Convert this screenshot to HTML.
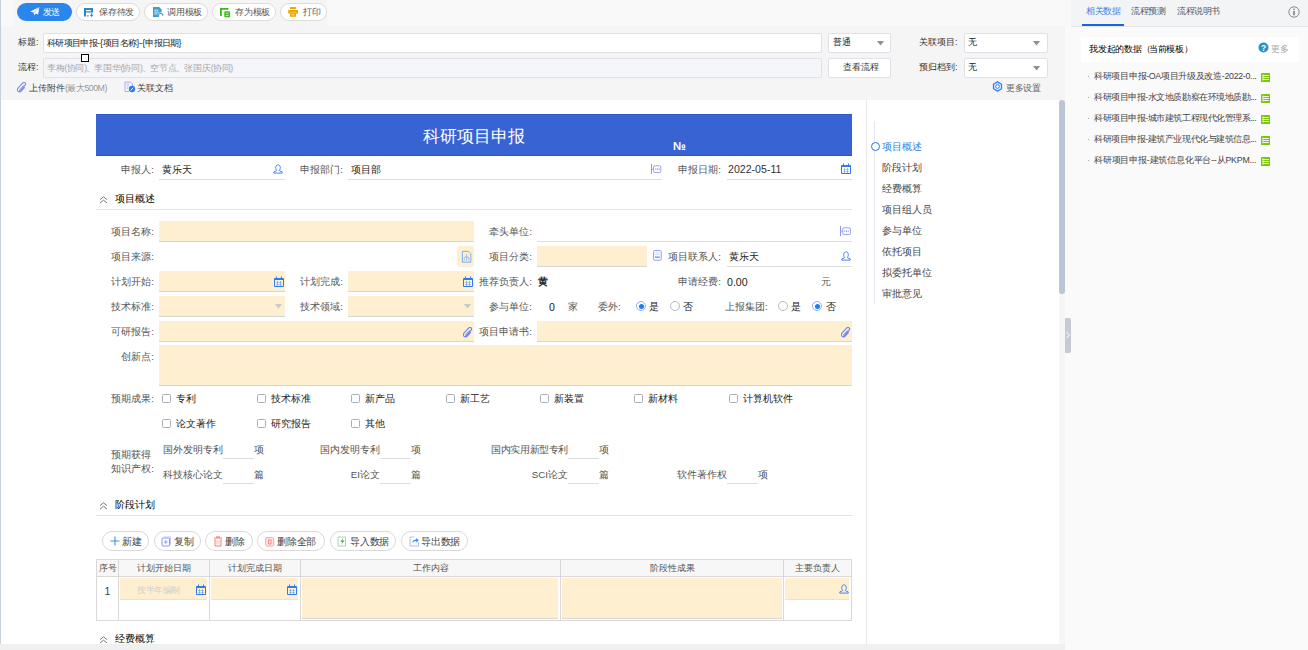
<!DOCTYPE html>
<html><head><meta charset="utf-8">
<style>
*{margin:0;padding:0;box-sizing:border-box}
html,body{width:1308px;height:650px;overflow:hidden;background:#fafafa;font-family:"Liberation Sans",sans-serif;color:#333;font-size:10px}
.a{position:absolute}
.t{position:absolute;white-space:nowrap;line-height:14px;font-size:8.8px}
#main{left:0;top:26px;width:1065px;height:624px;background:#f5f5f5;border-left:1px solid #c9d0de}
#toolbar{left:13px;top:0;width:314px;height:26px;background:#f5f5f5}
#band{left:0;top:0;width:1071px;height:26px;background:#f9f9f9;border-left:1px solid #c9d0de}
.btn{position:absolute;top:3px;height:18px;border:1px solid #dcdcdc;border-radius:9px;background:#fff;font-size:8.8px;line-height:16px;color:#555;white-space:nowrap;letter-spacing:-0.25px}
.inp{position:absolute;background:#fff;border:1px solid #dfe1e6;border-radius:2px}
#content{left:1px;top:100px;width:1058px;height:544px;background:#fff;overflow:hidden}
#bottom{left:0;top:644px;width:1065px;height:6px;background:#f0f0f0}

.L{position:absolute;left:0;white-space:nowrap;line-height:14px;font-size:9.8px;color:#555;text-align:right}
.V{position:absolute;white-space:nowrap;line-height:14px;font-size:9.8px;color:#222}
.B{position:absolute;background:#feefd0;border-bottom:1px solid #d6d6d6}
.U{position:absolute;border-bottom:1px solid #dedede}
.S{position:absolute;white-space:nowrap;line-height:14px;font-size:9.8px;color:#000;font-weight:500}
.cb{position:absolute;width:9px;height:9px;border:1px solid #a9aeb8;border-radius:1.5px;background:#fff}
.rd{position:absolute;width:10px;height:10px;border:1px solid #b4b9c6;border-radius:50%;background:#fff}
.rd.on{border-color:#8fb0f5}
.rd.on:after{content:"";position:absolute;left:1.5px;top:1.5px;width:5px;height:5px;border-radius:50%;background:#1a7cf0}
.tb{position:absolute;top:531px;height:20px;border:1px solid #d9d9d9;border-radius:10px;background:#fff;font-size:9.8px;line-height:19px;color:#444;white-space:nowrap;letter-spacing:-0.2px}
</style></head><body>
<div id="band" class="a"></div>
<div id="main" class="a"></div>
<div id="toolbar" class="a"></div>
<!-- toolbar buttons -->
<div class="a" style="left:17px;top:3px;width:55px;height:18px;border-radius:9px;background:#2a86ec;color:#fff;font-size:8.8px;line-height:18px;white-space:nowrap">
  <svg class="a" style="left:13px;top:4px" width="10" height="9" viewBox="0 0 10 9"><path d="M9.4 0 L0.3 4.6 L3.4 5.6 L4.5 8.4 L5.6 6.6 L8 7.6 Z" fill="#fff"/><path d="M9.4 0 L3.8 5.8" stroke="#2a86ec" stroke-width="0.5"/></svg>
  <span class="a" style="left:26px;top:0;letter-spacing:-0.6px">发送</span>
</div>
<div class="btn" style="left:76px;width:64px"><span class="a" style="left:22px;top:0">保存待发</span></div>
<div class="btn" style="left:144px;width:64px"><span class="a" style="left:22px;top:0">调用模板</span></div>
<div class="btn" style="left:212px;width:64px"><span class="a" style="left:22px;top:0">存为模板</span></div>
<div class="btn" style="left:280px;width:47px"><span class="a" style="left:22px;top:0">打印</span></div>

<!-- header form -->
<div class="t" style="left:18px;top:35px;color:#333">标题:</div>
<div class="inp" style="left:43px;top:33px;width:779px;height:20px"></div>
<div class="t" style="left:47px;top:36px;color:#222;letter-spacing:-0.65px">科研项目申报<span style="letter-spacing:0">-{</span>项目名称<span style="letter-spacing:0">}-{</span>申报日期}</div>
<div class="t" style="left:18px;top:60px;color:#333">流程:</div>
<div class="inp" style="left:43px;top:58px;width:779px;height:20px;background:#f5f6fa"></div>
<div class="a" style="left:81px;top:54px;width:8px;height:8px;border:1.5px solid #000;background:#fff"></div>
<div class="t" style="left:47px;top:61px;color:#aaa;letter-spacing:-0.2px">李梅<span style="letter-spacing:-1px">(</span>协同<span style="letter-spacing:-1px">)、</span>李国华<span style="letter-spacing:-1px">(</span>协同<span style="letter-spacing:-1px">)、</span>空节点<span style="letter-spacing:-1px">、</span>张国庆<span style="letter-spacing:-1px">(</span>协同<span style="letter-spacing:-1px">)</span></div>
<div class="inp" style="left:828px;top:33px;width:63px;height:20px"></div>
<div class="t" style="left:833px;top:35px;color:#222">普通</div>
<div class="inp" style="left:828px;top:58px;width:63px;height:20px"></div>
<div class="t" style="left:843px;top:60px;color:#333">查看流程</div>
<div class="t" style="left:919px;top:35px;color:#333">关联项目:</div>
<div class="inp" style="left:964px;top:33px;width:84px;height:20px"></div>
<div class="t" style="left:968px;top:35px;color:#222">无</div>
<div class="t" style="left:919px;top:60px;color:#333">预归档到:</div>
<div class="inp" style="left:964px;top:58px;width:84px;height:20px"></div>
<div class="t" style="left:968px;top:60px;color:#222">无</div>
<div class="t" style="left:1006px;top:81px;color:#666;letter-spacing:-0.5px">更多设置</div>
<div class="t" style="left:29px;top:81px;color:#444">上传附件<span style="color:#999;letter-spacing:-0.5px">(最大500M)</span></div>
<div class="t" style="left:137px;top:81px;color:#444">关联文档</div>

<!-- content -->
<div id="content" class="a"></div>
<div class="a" style="left:1059px;top:100px;width:6px;height:544px;background:#f6f6f6"></div>
<div class="a" style="left:1059px;top:100px;width:6px;height:194px;background:#bcc5d6;border-radius:3px"></div>
<div class="a" style="left:866px;top:100px;width:1px;height:544px;background:#e6e8ee"></div>

<!-- banner -->
<div class="a" style="left:96px;top:114px;width:756px;height:42px;background:#3863d2;border-top:1px solid #3159cc;border-bottom:1px solid #2d55c8"></div>
<div class="t" style="left:423px;top:127px;font-size:17px;line-height:20px;color:#fff;font-weight:500">科研项目申报</div>
<div class="t" style="left:673px;top:139px;font-size:11.5px;color:#fff;font-weight:bold">№</div>


<!-- form top row -->
<div class="L" style="width:154px;top:163px">申报人:</div>
<div class="U" style="left:159px;top:160px;width:126px;height:20px"></div>
<div class="V" style="left:162px;top:163px">黄乐天</div>
<div class="L" style="width:343px;top:163px">申报部门:</div>
<div class="U" style="left:348px;top:160px;width:314px;height:20px"></div>
<div class="V" style="left:351px;top:163px">项目部</div>
<div class="L" style="width:721px;top:163px">申报日期:</div>
<div class="U" style="left:727px;top:160px;width:125px;height:20px"></div>
<div class="V" style="left:728px;top:162px;font-size:10.6px;color:#333">2022-05-11</div>

<div class="S" style="left:115px;top:192px">项目概述</div>
<div class="a" style="left:96px;top:209px;width:756px;height:1px;background:#e4e4e4"></div>

<!-- overview rows -->
<div class="L" style="width:154px;top:225px">项目名称:</div>
<div class="B" style="left:159px;top:221px;width:315px;height:21px"></div>
<div class="L" style="width:532px;top:225px">牵头单位:</div>
<div class="U" style="left:537px;top:221px;width:315px;height:21px"></div>

<div class="L" style="width:154px;top:250px">项目来源:</div>
<div class="a" style="left:457px;top:246px;width:17px;height:21px;background:#feefd0;border-radius:3px"></div>
<div class="L" style="width:532px;top:250px">项目分类:</div>
<div class="B" style="left:537px;top:246px;width:110px;height:21px"></div>
<div class="L" style="width:721px;top:250px">项目联系人:</div>
<div class="U" style="left:727px;top:246px;width:125px;height:21px"></div>
<div class="V" style="left:729px;top:250px">黄乐天</div>

<div class="L" style="width:154px;top:275px">计划开始:</div>
<div class="B" style="left:159px;top:271px;width:126px;height:21px"></div>
<div class="L" style="width:343px;top:275px">计划完成:</div>
<div class="B" style="left:348px;top:271px;width:126px;height:21px"></div>
<div class="L" style="width:532px;top:275px">推荐负责人:</div>
<div class="V" style="left:538px;top:275px;font-weight:bold">黄</div>
<div class="L" style="width:721px;top:275px">申请经费:</div>
<div class="V" style="left:727px;top:275px;font-size:10.6px">0.00</div>
<div class="V" style="left:821px;top:275px;color:#555">元</div>

<div class="L" style="width:154px;top:300px">技术标准:</div>
<div class="B" style="left:159px;top:296px;width:126px;height:21px"></div>
<div class="L" style="width:343px;top:300px">技术领域:</div>
<div class="B" style="left:348px;top:296px;width:126px;height:21px"></div>
<div class="L" style="width:532px;top:300px">参与单位:</div>
<div class="V" style="left:549px;top:300px;font-size:10.6px">0</div>
<div class="V" style="left:568px;top:300px;color:#555">家</div>
<div class="V" style="left:598px;top:300px;color:#555">委外:</div>
<div class="rd on" style="left:636px;top:301px"></div>
<div class="V" style="left:649px;top:300px">是</div>
<div class="rd" style="left:670px;top:301px"></div>
<div class="V" style="left:683px;top:300px">否</div>
<div class="V" style="left:725px;top:300px;color:#555">上报集团:</div>
<div class="rd" style="left:778px;top:301px"></div>
<div class="V" style="left:791px;top:300px">是</div>
<div class="rd on" style="left:812px;top:301px"></div>
<div class="V" style="left:826px;top:300px">否</div>

<div class="L" style="width:154px;top:325px">可研报告:</div>
<div class="B" style="left:159px;top:321px;width:315px;height:21px"></div>
<div class="L" style="width:532px;top:325px">项目申请书:</div>
<div class="B" style="left:537px;top:321px;width:315px;height:21px"></div>

<div class="L" style="width:154px;top:350px">创新点:</div>
<div class="B" style="left:159px;top:345px;width:693px;height:41px"></div>

<div class="L" style="width:154px;top:392px">预期成果:</div>
<div class="cb" style="left:162px;top:394px"></div><div class="V" style="left:176px;top:392px">专利</div>
<div class="cb" style="left:257px;top:394px"></div><div class="V" style="left:271px;top:392px">技术标准</div>
<div class="cb" style="left:351px;top:394px"></div><div class="V" style="left:365px;top:392px">新产品</div>
<div class="cb" style="left:446px;top:394px"></div><div class="V" style="left:460px;top:392px">新工艺</div>
<div class="cb" style="left:540px;top:394px"></div><div class="V" style="left:554px;top:392px">新装置</div>
<div class="cb" style="left:634px;top:394px"></div><div class="V" style="left:648px;top:392px">新材料</div>
<div class="cb" style="left:729px;top:394px"></div><div class="V" style="left:743px;top:392px">计算机软件</div>
<div class="cb" style="left:162px;top:419px"></div><div class="V" style="left:176px;top:417px">论文著作</div>
<div class="cb" style="left:257px;top:419px"></div><div class="V" style="left:271px;top:417px">研究报告</div>
<div class="cb" style="left:351px;top:419px"></div><div class="V" style="left:365px;top:417px">其他</div>

<div class="L" style="width:151px;top:448px">预期获得</div>
<div class="L" style="width:154px;top:462px">知识产权:</div>
<div class="V" style="left:0;width:223px;text-align:right;top:443px;color:#555">国外发明专利</div><div class="U" style="left:223px;top:440px;width:31px;height:19px"></div><div class="V" style="left:254px;top:443px;color:#555">项</div>
<div class="V" style="left:0;width:380px;text-align:right;top:443px;color:#555">国内发明专利</div><div class="U" style="left:380px;top:440px;width:31px;height:19px"></div><div class="V" style="left:411px;top:443px;color:#555">项</div>
<div class="V" style="left:0;width:568px;text-align:right;top:443px;color:#555;letter-spacing:-0.4px">国内实用新型专利</div><div class="U" style="left:568px;top:440px;width:31px;height:19px"></div><div class="V" style="left:599px;top:443px;color:#555">项</div>
<div class="V" style="left:0;width:223px;text-align:right;top:468px;color:#555">科技核心论文</div><div class="U" style="left:223px;top:465px;width:31px;height:19px"></div><div class="V" style="left:254px;top:468px;color:#555">篇</div>
<div class="V" style="left:0;width:380px;text-align:right;top:468px;color:#555">EI论文</div><div class="U" style="left:380px;top:465px;width:31px;height:19px"></div><div class="V" style="left:411px;top:468px;color:#555">篇</div>
<div class="V" style="left:0;width:568px;text-align:right;top:468px;color:#555">SCI论文</div><div class="U" style="left:568px;top:465px;width:31px;height:19px"></div><div class="V" style="left:599px;top:468px;color:#555">篇</div>
<div class="V" style="left:0;width:727px;text-align:right;top:468px;color:#555">软件著作权</div><div class="U" style="left:727px;top:465px;width:31px;height:19px"></div><div class="V" style="left:758px;top:468px;color:#555">项</div>

<div class="S" style="left:115px;top:498px">阶段计划</div>
<div class="a" style="left:96px;top:515px;width:756px;height:1px;background:#e4e4e4"></div>

<div class="tb" style="left:102px;width:47px"><span class="a" style="left:19px;top:0">新建</span></div>
<div class="tb" style="left:154px;width:47px"><span class="a" style="left:19px;top:0">复制</span></div>
<div class="tb" style="left:205px;width:48px"><span class="a" style="left:19px;top:0">删除</span></div>
<div class="tb" style="left:257px;width:68px"><span class="a" style="left:19px;top:0">删除全部</span></div>
<div class="tb" style="left:330px;width:66px"><span class="a" style="left:19px;top:0">导入数据</span></div>
<div class="tb" style="left:401px;width:67px"><span class="a" style="left:19px;top:0">导出数据</span></div>

<!-- table -->
<div class="a" style="left:96px;top:559px;width:756px;height:62px;border:1px solid #d9d9d9;background:#fff"></div>
<div class="a" style="left:97px;top:560px;width:754px;height:17px;background:#f7f7f7;border-bottom:1px solid #d9d9d9"></div>
<div class="a" style="left:118px;top:560px;width:1px;height:60px;background:#d9d9d9"></div>
<div class="a" style="left:209px;top:560px;width:1px;height:60px;background:#d9d9d9"></div>
<div class="a" style="left:300px;top:560px;width:1px;height:60px;background:#d9d9d9"></div>
<div class="a" style="left:560px;top:560px;width:1px;height:60px;background:#d9d9d9"></div>
<div class="a" style="left:783px;top:560px;width:1px;height:60px;background:#d9d9d9"></div>
<div class="V" style="left:97px;width:21px;text-align:center;top:561px;font-size:8.8px;color:#555">序号</div>
<div class="V" style="left:119px;width:90px;text-align:center;top:561px;font-size:8.8px;color:#555">计划开始日期</div>
<div class="V" style="left:210px;width:90px;text-align:center;top:561px;font-size:8.8px;color:#555">计划完成日期</div>
<div class="V" style="left:301px;width:259px;text-align:center;top:561px;font-size:8.8px;color:#555">工作内容</div>
<div class="V" style="left:561px;width:222px;text-align:center;top:561px;font-size:8.8px;color:#555">阶段性成果</div>
<div class="V" style="left:784px;width:67px;text-align:center;top:561px;font-size:8.8px;color:#555">主要负责人</div>
<div class="V" style="left:97px;width:21px;text-align:center;top:584px;color:#444;font-size:10.6px">1</div>
<div class="B" style="left:120px;top:578px;width:87px;height:22px;border-bottom-color:#e6e2da"></div>
<div class="V" style="left:137px;top:583px;font-size:8.8px;color:#cfcfcf;letter-spacing:-0.4px">按半年编制</div>
<div class="B" style="left:211px;top:578px;width:87px;height:22px;border-bottom-color:#e6e2da"></div>
<div class="B" style="left:302px;top:578px;width:256px;height:41px"></div>
<div class="B" style="left:562px;top:578px;width:220px;height:41px"></div>
<div class="B" style="left:785px;top:578px;width:64px;height:22px;border-bottom-color:#e6e2da"></div>

<div class="S" style="left:115px;top:632px">经费概算</div>


<!-- nav -->
<div class="a" style="left:874px;top:121px;width:1px;height:183px;background:#e3e6ec"></div>
<div class="a" style="left:871px;top:142px;width:9px;height:9px;border:1.8px solid #1e7ae6;border-radius:50%;background:#fff"></div>
<div class="V" style="left:882px;top:140px;font-size:9.8px;color:#2f7fe6">项目概述</div>
<div class="V" style="left:882px;top:161px;font-size:9.8px;color:#444">阶段计划</div>
<div class="V" style="left:882px;top:182px;font-size:9.8px;color:#444">经费概算</div>
<div class="V" style="left:882px;top:203px;font-size:9.8px;color:#444">项目组人员</div>
<div class="V" style="left:882px;top:224px;font-size:9.8px;color:#444">参与单位</div>
<div class="V" style="left:882px;top:245px;font-size:9.8px;color:#444">依托项目</div>
<div class="V" style="left:882px;top:266px;font-size:9.8px;color:#444">拟委托单位</div>
<div class="V" style="left:882px;top:287px;font-size:9.8px;color:#444">审批意见</div>
<div id="bottom" class="a"></div>
<!-- right panel -->
<div class="a" style="left:1071px;top:0;width:237px;height:27px;background:#f3f4f6;border-bottom:1px solid #e3e5ea"></div>
<div class="t" style="left:1086px;top:4px;font-size:9px;color:#3b7de8;letter-spacing:-0.45px">相关数据</div>
<div class="a" style="left:1082px;top:24px;width:42px;height:2px;background:#1764e0"></div>
<div class="t" style="left:1131px;top:4px;font-size:9px;color:#555;letter-spacing:-0.45px">流程预测</div>
<div class="t" style="left:1177px;top:4px;font-size:9px;color:#555;letter-spacing:-0.45px">流程说明书</div>
<div class="a" style="left:1081px;top:37px;width:218px;height:25px;background:#fff"></div>
<div class="t" style="left:1089px;top:42px;font-size:9px;color:#000;font-weight:500;letter-spacing:-0.2px">我发起的数据<span style="letter-spacing:-2px">（</span>当前模板<span style="letter-spacing:-2px">）</span></div>
<div class="t" style="left:1271px;top:42px;font-size:9px;color:#aaa;letter-spacing:-0.5px">更多</div>
<div class="a" style="left:1088px;top:76px;width:1px;height:1px;background:#aaa"></div><div class="t" style="left:1094px;top:69px;color:#444;letter-spacing:-0.3px">科研项目申报-OA项目升级及改造-2022-0...</div>
<div class="a" style="left:1088px;top:97px;width:1px;height:1px;background:#aaa"></div><div class="t" style="left:1094px;top:90px;color:#444;letter-spacing:-0.45px">科研项目申报-水文地质勘察在环境地质勘...</div>
<div class="a" style="left:1088px;top:118px;width:1px;height:1px;background:#aaa"></div><div class="t" style="left:1094px;top:111px;color:#444;letter-spacing:-0.45px">科研项目申报-城市建筑工程现代化管理系...</div>
<div class="a" style="left:1088px;top:139px;width:1px;height:1px;background:#aaa"></div><div class="t" style="left:1094px;top:132px;color:#444;letter-spacing:-0.45px">科研项目申报-建筑产业现代化与建筑信息...</div>
<div class="a" style="left:1088px;top:160px;width:1px;height:1px;background:#aaa"></div><div class="t" style="left:1094px;top:153px;color:#444;letter-spacing:-0.2px">科研项目申报-建筑信息化平台--从PKPM...</div>
<svg class="a" style="left:273px;top:164px" width="10" height="10" viewBox="0 0 10 10"><path d="M3.6 6.1 C2.7 5.3 2.6 4 2.8 2.9 C3.1 1.5 3.9 0.8 5 0.8 C6.1 0.8 6.9 1.5 7.2 2.9 C7.4 4 7.3 5.3 6.4 6.1 L6.4 6.7 L9.2 7.9 L9.2 9.1 L0.8 9.1 L0.8 7.9 L3.6 6.7 Z" fill="none" stroke="#3d7ff5" stroke-width="0.95"/></svg>
<svg class="a" style="left:651px;top:164px" width="11" height="11" viewBox="0 0 11 11"><path d="M0.5 0 V10" stroke="#8e95ee" stroke-width="1"/><rect x="2.6" y="1.8" width="7.2" height="6.8" rx="1.2" fill="none" stroke="#8e95ee" stroke-width="0.9"/><path d="M1 5.2 H2.8 M4.8 4.3 V6 M6.5 4.3 V6 M8.2 4.3 V6" stroke="#8e95ee" stroke-width="0.8"/></svg>
<svg class="a" style="left:841px;top:163px" width="10" height="11" viewBox="0 0 10 11"><path d="M0.5 2.5 H9.5 V10.5 H0.5 Z" fill="none" stroke="#2d7cf0" stroke-width="1"/><path d="M0.5 3.5 H9.5" stroke="#2d7cf0" stroke-width="1"/><path d="M2.5 0.5 V3 M7.5 0.5 V3" stroke="#2d7cf0" stroke-width="1"/><path d="M3.5 5 V10 M6.5 5 V10" stroke="#2d7cf0" stroke-width="1" opacity="0.45"/><path d="M2 6.5 H8 M2 8.5 H8" stroke="#2d7cf0" stroke-width="1" opacity="0.3"/></svg>
<svg class="a" style="left:840px;top:226px" width="11" height="11" viewBox="0 0 11 11"><path d="M0.5 0 V10" stroke="#8e95ee" stroke-width="1"/><rect x="2.8" y="1.8" width="7.6" height="6.8" rx="1.2" fill="none" stroke="#8e95ee" stroke-width="0.9"/><path d="M1 5.2 H2.8 M4.8 4.3 V6 M6.5 4.3 V6 M8.2 4.3 V6" stroke="#8e95ee" stroke-width="0.8"/></svg>
<svg class="a" style="left:461px;top:250px" width="11" height="13" viewBox="0 0 11 13"><path d="M1.4 1.4 H7.6 L9.8 3.6 V12.2 H1.4 Z" fill="none" stroke="#6ea6ee" stroke-width="0.9"/><path d="M5.6 4.2 V9.6 M3.3 9.6 V8.3 Q3.3 6.8 5.6 6.8 Q7.9 6.8 7.9 8.3 V9.6" fill="none" stroke="#7ab0f0" stroke-width="0.8"/><circle cx="3.3" cy="10" r="0.6" fill="#6ea6ee"/><circle cx="5.6" cy="10" r="0.6" fill="#6ea6ee"/><circle cx="7.9" cy="10" r="0.6" fill="#6ea6ee"/></svg>
<svg class="a" style="left:653px;top:250px" width="9" height="11" viewBox="0 0 9 11"><rect x="0.6" y="0.6" width="7.6" height="9.6" rx="0.8" fill="none" stroke="#8aa0f0" stroke-width="1"/><path d="M2.2 2.8 H6.6 M2.2 4.6 H6.6" stroke="#8aa0f0" stroke-width="0.6" opacity="0.6"/><rect x="2" y="6.4" width="4.8" height="1.6" fill="#8aa0f0"/></svg>
<svg class="a" style="left:841px;top:251px" width="10" height="10" viewBox="0 0 10 10"><path d="M3.6 6.1 C2.7 5.3 2.6 4 2.8 2.9 C3.1 1.5 3.9 0.8 5 0.8 C6.1 0.8 6.9 1.5 7.2 2.9 C7.4 4 7.3 5.3 6.4 6.1 L6.4 6.7 L9.2 7.9 L9.2 9.1 L0.8 9.1 L0.8 7.9 L3.6 6.7 Z" fill="none" stroke="#3d7ff5" stroke-width="0.95"/></svg>
<svg class="a" style="left:274px;top:276px" width="10" height="11" viewBox="0 0 10 11"><path d="M0.5 2.5 H9.5 V10.5 H0.5 Z" fill="none" stroke="#2d7cf0" stroke-width="1"/><path d="M0.5 3.5 H9.5" stroke="#2d7cf0" stroke-width="1"/><path d="M2.5 0.5 V3 M7.5 0.5 V3" stroke="#2d7cf0" stroke-width="1"/><path d="M3.5 5 V10 M6.5 5 V10" stroke="#2d7cf0" stroke-width="1" opacity="0.45"/><path d="M2 6.5 H8 M2 8.5 H8" stroke="#2d7cf0" stroke-width="1" opacity="0.3"/></svg>
<svg class="a" style="left:463px;top:276px" width="10" height="11" viewBox="0 0 10 11"><path d="M0.5 2.5 H9.5 V10.5 H0.5 Z" fill="none" stroke="#2d7cf0" stroke-width="1"/><path d="M0.5 3.5 H9.5" stroke="#2d7cf0" stroke-width="1"/><path d="M2.5 0.5 V3 M7.5 0.5 V3" stroke="#2d7cf0" stroke-width="1"/><path d="M3.5 5 V10 M6.5 5 V10" stroke="#2d7cf0" stroke-width="1" opacity="0.45"/><path d="M2 6.5 H8 M2 8.5 H8" stroke="#2d7cf0" stroke-width="1" opacity="0.3"/></svg>
<svg class="a" style="left:275px;top:304px" width="8" height="5.6" viewBox="0 0 8 5.6"><path d="M0 0 H7 L3.5 4.6 Z" fill="#c9c9c9"/></svg>
<svg class="a" style="left:464px;top:304px" width="8" height="5.6" viewBox="0 0 8 5.6"><path d="M0 0 H7 L3.5 4.6 Z" fill="#c9c9c9"/></svg>
<svg class="a" style="left:463px;top:327px" width="10" height="11" viewBox="0 0 10 11"><path d="M2.2 9.6 L8 3.4 C8.9 2.4 8.8 1.2 8 0.7 C7.2 0.1 6.1 0.4 5.3 1.3 L1.2 5.8 C0.1 7 0.2 8.5 1.1 9.4 C1.9 10.2 3.3 10.1 4.2 9.1 L7.4 5.6" fill="none" stroke="#6a86f0" stroke-width="1.1" stroke-linecap="round"/><path d="M2.7 7.8 L6.5 3.7" stroke="#6a86f0" stroke-width="1" stroke-linecap="round"/></svg>
<svg class="a" style="left:841px;top:327px" width="10" height="11" viewBox="0 0 10 11"><path d="M2.2 9.6 L8 3.4 C8.9 2.4 8.8 1.2 8 0.7 C7.2 0.1 6.1 0.4 5.3 1.3 L1.2 5.8 C0.1 7 0.2 8.5 1.1 9.4 C1.9 10.2 3.3 10.1 4.2 9.1 L7.4 5.6" fill="none" stroke="#6a86f0" stroke-width="1.1" stroke-linecap="round"/><path d="M2.7 7.8 L6.5 3.7" stroke="#6a86f0" stroke-width="1" stroke-linecap="round"/></svg>
<svg class="a" style="left:99px;top:196px" width="9" height="8" viewBox="0 0 9 8"><path d="M1 3.6 L4.5 0.8 L8 3.6 M1 7 L4.5 4.2 L8 7" fill="none" stroke="#7a7a7a" stroke-width="1"/></svg>
<svg class="a" style="left:99px;top:502px" width="9" height="8" viewBox="0 0 9 8"><path d="M1 3.6 L4.5 0.8 L8 3.6 M1 7 L4.5 4.2 L8 7" fill="none" stroke="#7a7a7a" stroke-width="1"/></svg>
<svg class="a" style="left:99px;top:636px" width="9" height="8" viewBox="0 0 9 8"><path d="M1 3.6 L4.5 0.8 L8 3.6 M1 7 L4.5 4.2 L8 7" fill="none" stroke="#7a7a7a" stroke-width="1"/></svg>
<svg class="a" style="left:196px;top:584px" width="10" height="11" viewBox="0 0 10 11"><path d="M0.5 2.5 H9.5 V10.5 H0.5 Z" fill="none" stroke="#2d7cf0" stroke-width="1"/><path d="M0.5 3.5 H9.5" stroke="#2d7cf0" stroke-width="1"/><path d="M2.5 0.5 V3 M7.5 0.5 V3" stroke="#2d7cf0" stroke-width="1"/><path d="M3.5 5 V10 M6.5 5 V10" stroke="#2d7cf0" stroke-width="1" opacity="0.45"/><path d="M2 6.5 H8 M2 8.5 H8" stroke="#2d7cf0" stroke-width="1" opacity="0.3"/></svg>
<svg class="a" style="left:287px;top:584px" width="10" height="11" viewBox="0 0 10 11"><path d="M0.5 2.5 H9.5 V10.5 H0.5 Z" fill="none" stroke="#2d7cf0" stroke-width="1"/><path d="M0.5 3.5 H9.5" stroke="#2d7cf0" stroke-width="1"/><path d="M2.5 0.5 V3 M7.5 0.5 V3" stroke="#2d7cf0" stroke-width="1"/><path d="M3.5 5 V10 M6.5 5 V10" stroke="#2d7cf0" stroke-width="1" opacity="0.45"/><path d="M2 6.5 H8 M2 8.5 H8" stroke="#2d7cf0" stroke-width="1" opacity="0.3"/></svg>
<svg class="a" style="left:839px;top:584px" width="10" height="10" viewBox="0 0 10 10"><path d="M3.6 6.1 C2.7 5.3 2.6 4 2.8 2.9 C3.1 1.5 3.9 0.8 5 0.8 C6.1 0.8 6.9 1.5 7.2 2.9 C7.4 4 7.3 5.3 6.4 6.1 L6.4 6.7 L9.2 7.9 L9.2 9.1 L0.8 9.1 L0.8 7.9 L3.6 6.7 Z" fill="none" stroke="#3d7ff5" stroke-width="0.95"/></svg>
<svg class="a" style="left:877px;top:41px" width="8" height="5.5" viewBox="0 0 8 5.5"><path d="M0 0 H7 L3.5 4.5 Z" fill="#8f8f8f"/></svg>
<svg class="a" style="left:1033px;top:41px" width="8" height="5.5" viewBox="0 0 8 5.5"><path d="M0 0 H7 L3.5 4.5 Z" fill="#8f8f8f"/></svg>
<svg class="a" style="left:1033px;top:66px" width="8" height="5.5" viewBox="0 0 8 5.5"><path d="M0 0 H7 L3.5 4.5 Z" fill="#8f8f8f"/></svg>
<svg class="a" style="left:17px;top:82px" width="10" height="11" viewBox="0 0 10 11"><path d="M2.2 9.6 L8 3.4 C8.9 2.4 8.8 1.2 8 0.7 C7.2 0.1 6.1 0.4 5.3 1.3 L1.2 5.8 C0.1 7 0.2 8.5 1.1 9.4 C1.9 10.2 3.3 10.1 4.2 9.1 L7.4 5.6" fill="none" stroke="#7c8ff0" stroke-width="1.1" stroke-linecap="round"/><path d="M2.7 7.8 L6.5 3.7" stroke="#7c8ff0" stroke-width="1" stroke-linecap="round"/></svg>
<svg class="a" style="left:124px;top:81px" width="12" height="12" viewBox="0 0 12 12"><path d="M1 1 H6.5 L8.5 3 V5" fill="none" stroke="#b3a2f2" stroke-width="0.9"/><path d="M1 1 V10.5 H5" fill="none" stroke="#b3a2f2" stroke-width="0.9"/><path d="M2.8 3.2 H5 M2.8 5.2 H4.5 M2.8 7.2 H4" stroke="#9aa7f2" stroke-width="0.8"/><circle cx="8" cy="8" r="3.2" fill="#2b7ff0"/><path d="M6.6 9.4 L9.2 6.8" stroke="#fff" stroke-width="0.9"/></svg>
<svg class="a" style="left:992px;top:81px" width="11" height="11" viewBox="0 0 11 11"><path d="M5.50 0.90 L9.48 3.20 L9.48 7.80 L5.50 10.10 L1.52 7.80 L1.52 3.20 Z" fill="none" stroke="#2b7fff" stroke-width="1.3" stroke-linejoin="round"/><circle cx="5.5" cy="5.5" r="1.9" fill="none" stroke="#2b7fff" stroke-width="1"/></svg>
<svg class="a" style="left:84px;top:8px" width="10" height="10" viewBox="0 0 10 10"><path fill-rule="evenodd" d="M0 0 H9 V4.6 H2 V8.4 H0 Z M2 1.9 H7 V3.2 H2 Z" fill="#2b86c5"/><rect x="3" y="7.3" width="1.7" height="1.1" fill="#2b86c5"/><rect x="6.9" y="5.3" width="1.3" height="2.6" fill="#2b86c5"/><path d="M5.8 7.1 H9.3 L7.55 9 Z" fill="#2b86c5"/></svg>
<svg class="a" style="left:153px;top:7px" width="11" height="11" viewBox="0 0 11 11"><path d="M0 0 H6.2 L8.6 2.4 V10 H0 Z" fill="#3aa0d0"/><path d="M1.3 3.2 H5.4 M1.3 5.1 H5.4 M1.3 7 H4.4" stroke="#fff" stroke-width="0.8"/><circle cx="7.8" cy="8.2" r="2.9" fill="#fff"/><path d="M6 9.8 A2.1 2.1 0 1 1 9.7 8.2" fill="none" stroke="#3aa0d0" stroke-width="1.1"/><path d="M8.7 7.6 L9.8 9.2 L10.7 7.6 Z" fill="#3aa0d0"/></svg>
<svg class="a" style="left:220px;top:8px" width="11" height="10" viewBox="0 0 11 10"><path d="M0 0 H8.5 V1.8 H1.8 V8 H0 Z" fill="#3cb81a"/><rect x="4.3" y="3.3" width="5.8" height="6" rx="0.8" fill="#3cb81a"/><path d="M5.6 5.1 H8.8 M5.6 7.4 H8.8" stroke="#fff" stroke-width="0.7"/></svg>
<svg class="a" style="left:288px;top:7px" width="11" height="11" viewBox="0 0 11 11"><rect x="2" y="0" width="6" height="2" rx="0.5" fill="#f5a700"/><path d="M0.2 3 H10 V6.5 H8 V5.5 H2 V6.5 H0.2 Z" fill="#f5a700"/><rect x="2" y="5.5" width="6" height="4.3" fill="#f5a700"/><path d="M3.5 7.8 H6.5" stroke="#fff" stroke-width="0.7"/></svg>
<svg class="a" style="left:110px;top:536px" width="10" height="10" viewBox="0 0 10 10"><path d="M5 0.5 V9.5 M0.5 5 H9.5" stroke="#3a8ef0" stroke-width="1.1"/></svg>
<svg class="a" style="left:161px;top:536px" width="11" height="11" viewBox="0 0 11 11"><rect x="1" y="2" width="7.5" height="8" rx="0.8" fill="none" stroke="#7f8cf0" stroke-width="0.9"/><path d="M2.5 1 H9.5 V8.5" fill="none" stroke="#b1b9f5" stroke-width="0.8"/><path d="M4.75 4 V8 M2.75 6 H6.75" stroke="#7f8cf0" stroke-width="0.8"/></svg>
<svg class="a" style="left:213px;top:536px" width="10" height="11" viewBox="0 0 10 11"><path d="M1 2 H9 M3.5 2 V0.8 H6.5 V2" fill="none" stroke="#f56c6c" stroke-width="0.9"/><path d="M2 3 V10 H8 V3" fill="none" stroke="#f56c6c" stroke-width="0.9"/><path d="M4 4.2 V8.5 M6 4.2 V8.5" stroke="#f7a0a0" stroke-width="0.7"/></svg>
<svg class="a" style="left:265px;top:536px" width="11" height="11" viewBox="0 0 11 11"><rect x="0.6" y="1.5" width="8.2" height="8.6" rx="1.5" fill="#fde3e3" stroke="#f59a9a" stroke-width="0.8"/><path d="M3 4 H6.5 M3.5 4 V8 H6 V4" fill="none" stroke="#f56c6c" stroke-width="0.7"/></svg>
<svg class="a" style="left:337px;top:536px" width="10" height="11" viewBox="0 0 10 11"><path d="M1 1 H8.5 V10 H1 Z" fill="none" stroke="#9fd3a8" stroke-width="0.9"/><path d="M6.5 1.5 L3.5 5.8 H5.5 L4 9 L7.5 4.6 H5.3 Z" fill="#2ea64a"/></svg>
<svg class="a" style="left:409px;top:536px" width="11" height="11" viewBox="0 0 11 11"><path d="M5 1 H1 V10 H9.5 V6" fill="none" stroke="#a2b8f5" stroke-width="0.9"/><path d="M3.2 7.2 C3.5 4.5 5 3.5 7.2 3.5 V2 L9.8 4.3 L7.2 6.6 V5 C5.6 5 4.3 5.7 3.2 7.2 Z" fill="#3a8ef0"/></svg>
<svg class="a" style="left:1288px;top:6px" width="12" height="12" viewBox="0 0 12 12"><circle cx="6" cy="6" r="5.2" fill="none" stroke="#7a7f8f" stroke-width="0.9"/><path d="M6 5 V9.2" stroke="#555" stroke-width="1.2"/><circle cx="6" cy="3.3" r="0.7" fill="#555"/></svg>
<svg class="a" style="left:1258px;top:42px" width="11" height="11" viewBox="0 0 11 11"><circle cx="5.5" cy="5.5" r="5" fill="#2b90c4"/><text x="5.5" y="8.6" font-size="8.5" font-weight="bold" text-anchor="middle" fill="#fff" font-family="Liberation Sans">?</text></svg>
<svg class="a" style="left:1261px;top:73px" width="9" height="9" viewBox="0 0 9 9"><rect width="9" height="9" rx="0.6" fill="#7cc70e"/><path d="M3 2.5 H7.8 M3 4.5 H7.8 M3 6.5 H7.8" stroke="#fff" stroke-width="0.9"/><path d="M2.2 1.5 V7.5" stroke="#fff" stroke-width="0.7"/><path d="M1.3 2.5 H2.6 M1.3 4.5 H2.6 M1.3 6.5 H2.6" stroke="#fff" stroke-width="0.9"/></svg>
<svg class="a" style="left:1261px;top:94px" width="9" height="9" viewBox="0 0 9 9"><rect width="9" height="9" rx="0.6" fill="#7cc70e"/><path d="M3 2.5 H7.8 M3 4.5 H7.8 M3 6.5 H7.8" stroke="#fff" stroke-width="0.9"/><path d="M2.2 1.5 V7.5" stroke="#fff" stroke-width="0.7"/><path d="M1.3 2.5 H2.6 M1.3 4.5 H2.6 M1.3 6.5 H2.6" stroke="#fff" stroke-width="0.9"/></svg>
<svg class="a" style="left:1261px;top:115px" width="9" height="9" viewBox="0 0 9 9"><rect width="9" height="9" rx="0.6" fill="#7cc70e"/><path d="M3 2.5 H7.8 M3 4.5 H7.8 M3 6.5 H7.8" stroke="#fff" stroke-width="0.9"/><path d="M2.2 1.5 V7.5" stroke="#fff" stroke-width="0.7"/><path d="M1.3 2.5 H2.6 M1.3 4.5 H2.6 M1.3 6.5 H2.6" stroke="#fff" stroke-width="0.9"/></svg>
<svg class="a" style="left:1261px;top:136px" width="9" height="9" viewBox="0 0 9 9"><rect width="9" height="9" rx="0.6" fill="#7cc70e"/><path d="M3 2.5 H7.8 M3 4.5 H7.8 M3 6.5 H7.8" stroke="#fff" stroke-width="0.9"/><path d="M2.2 1.5 V7.5" stroke="#fff" stroke-width="0.7"/><path d="M1.3 2.5 H2.6 M1.3 4.5 H2.6 M1.3 6.5 H2.6" stroke="#fff" stroke-width="0.9"/></svg>
<svg class="a" style="left:1261px;top:157px" width="9" height="9" viewBox="0 0 9 9"><rect width="9" height="9" rx="0.6" fill="#7cc70e"/><path d="M3 2.5 H7.8 M3 4.5 H7.8 M3 6.5 H7.8" stroke="#fff" stroke-width="0.9"/><path d="M2.2 1.5 V7.5" stroke="#fff" stroke-width="0.7"/><path d="M1.3 2.5 H2.6 M1.3 4.5 H2.6 M1.3 6.5 H2.6" stroke="#fff" stroke-width="0.9"/></svg>
<div class="a" style="left:1065px;top:318px;width:6px;height:35px;background:#c5cad5;border-radius:0 2px 2px 0"></div>
<svg class="a" style="left:1065px;top:331px" width="6" height="8" viewBox="0 0 6 8"><path d="M1.2 0.8 L4.6 4 L1.2 7.2" fill="none" stroke="#fff" stroke-width="1"/></svg>
</body></html>
